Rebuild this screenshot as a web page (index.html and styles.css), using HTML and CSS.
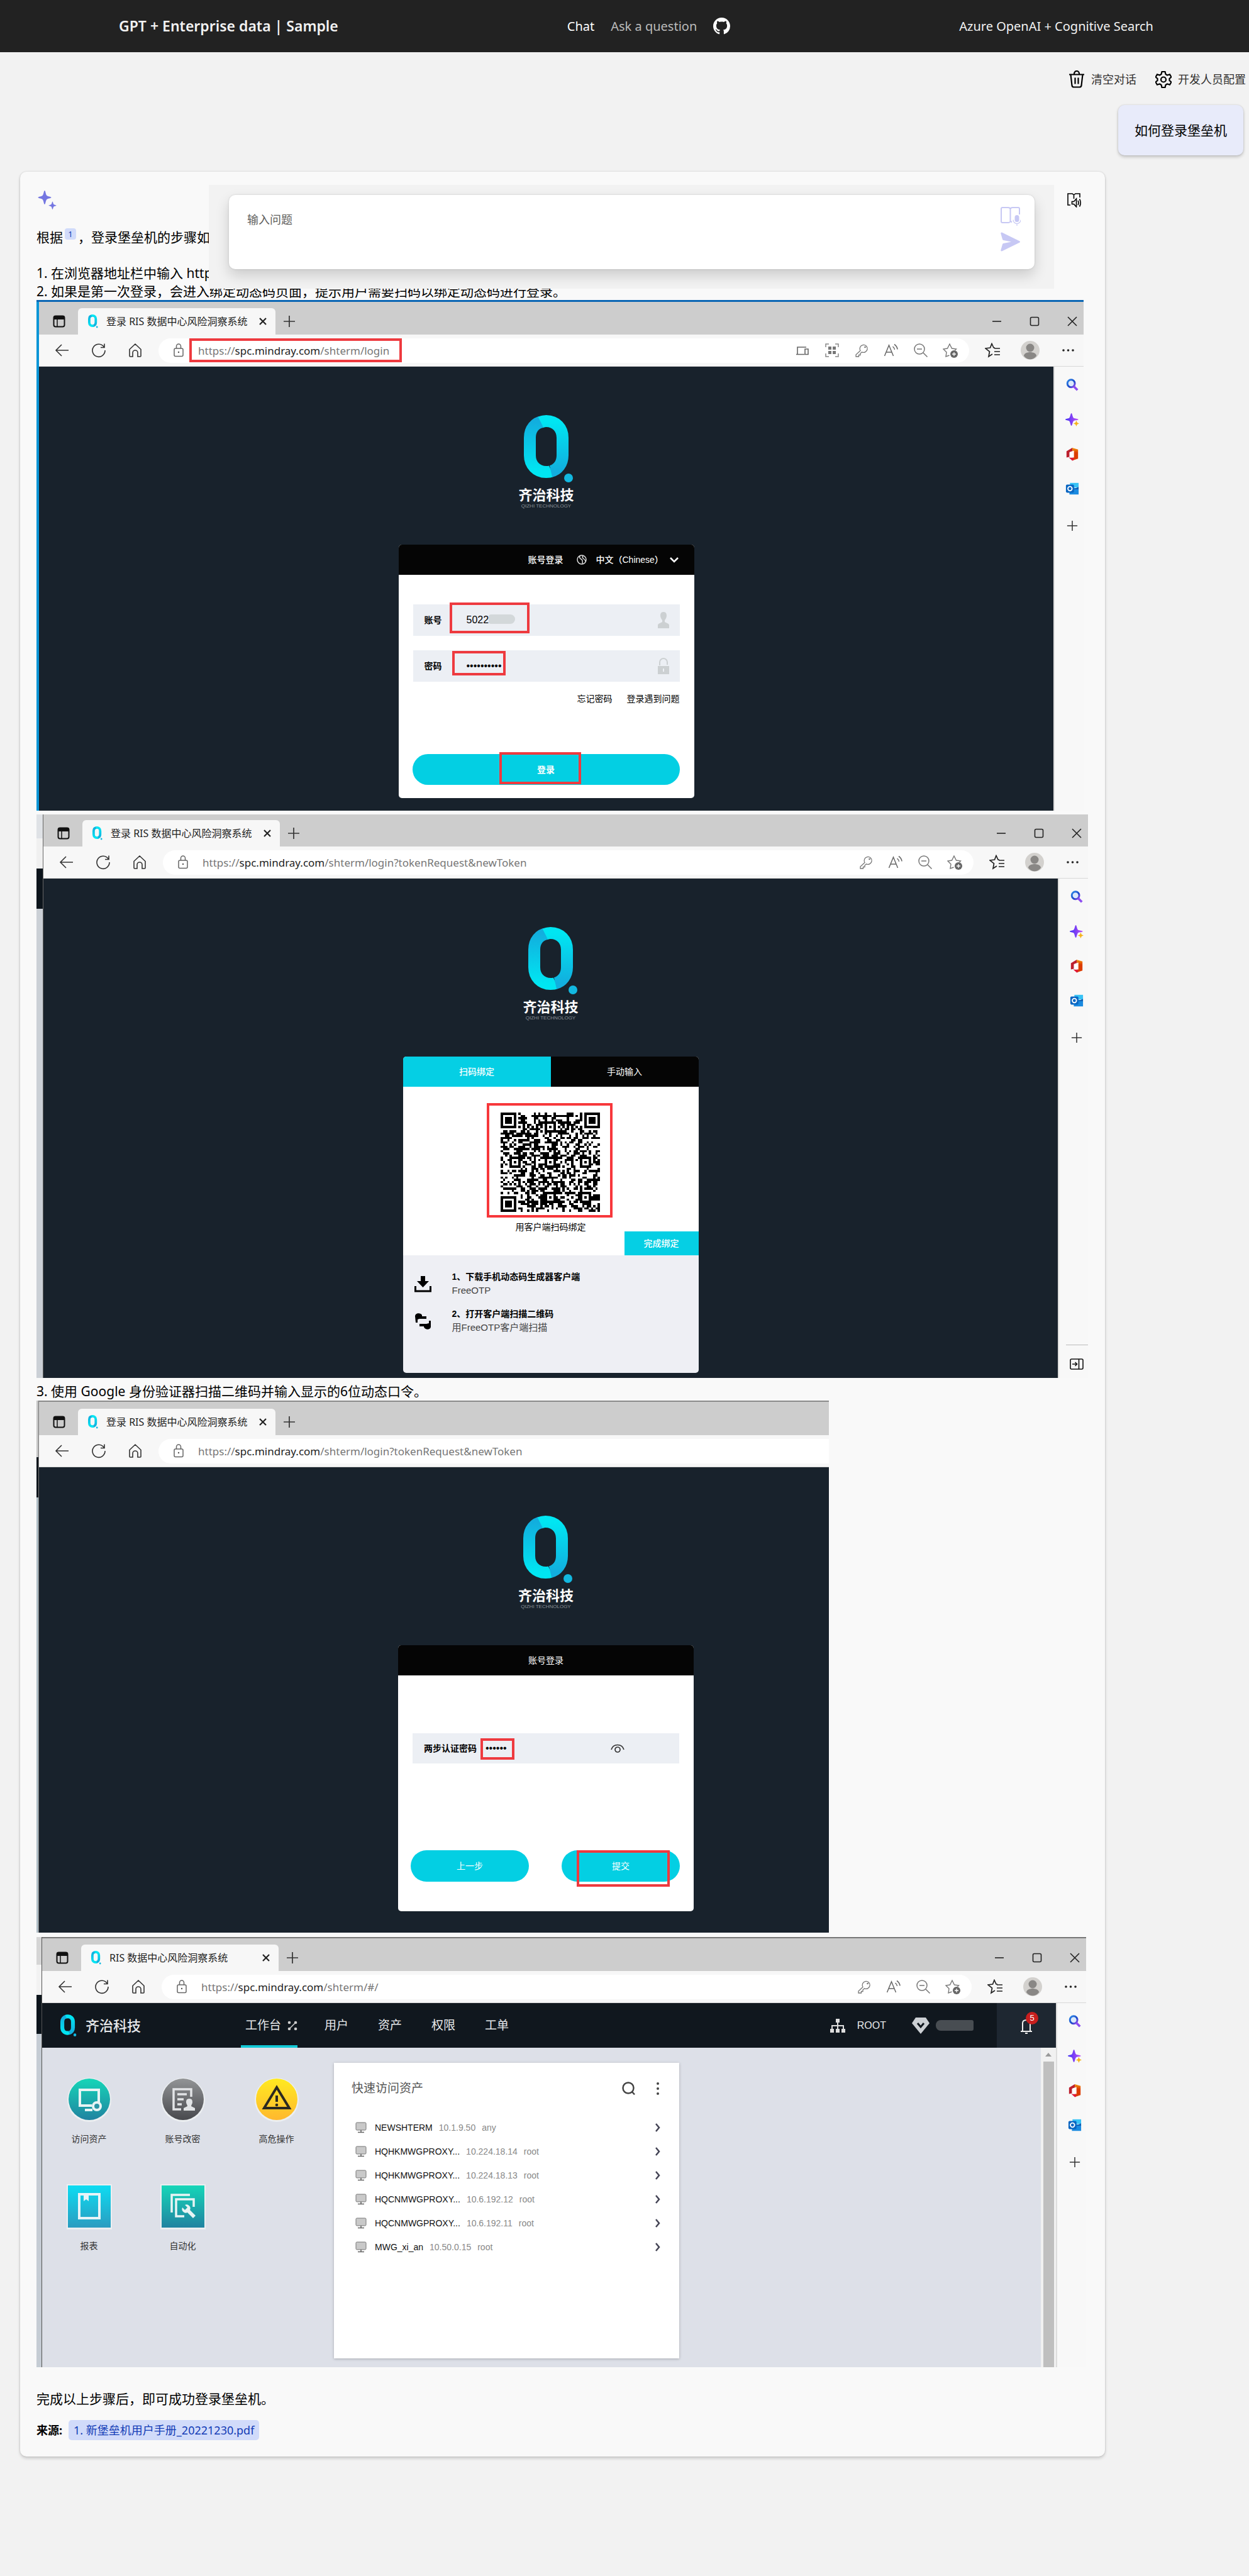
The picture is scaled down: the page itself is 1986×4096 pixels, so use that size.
FILE: index.html
```html
<!DOCTYPE html>
<html lang="zh-CN">
<head>
<meta charset="utf-8">
<meta name="viewport" content="width=device-width, initial-scale=1">
<title>GPT + Enterprise data | Sample</title>
<link rel="stylesheet" href="styles.css">
</head>
<body>
<svg class="defs" width="0" height="0" aria-hidden="true">
  <defs>
    <linearGradient id="gl" x1="0" y1="0" x2="0" y2="100" gradientUnits="userSpaceOnUse"><stop offset=".1" stop-color="#12aede"/><stop offset=".9" stop-color="#00e6f2"/></linearGradient>
    <linearGradient id="gr" x1="0" y1="0" x2="0" y2="100" gradientUnits="userSpaceOnUse"><stop offset=".1" stop-color="#00e6f2"/><stop offset=".9" stop-color="#12aede"/></linearGradient>
    <linearGradient id="gs" x1="0" y1="0" x2="1" y2="1"><stop offset="0" stop-color="#2f8be8"/><stop offset=".6" stop-color="#1b46c8"/><stop offset="1" stop-color="#a24df2"/></linearGradient>
    <linearGradient id="gp" x1="0" y1="0" x2="1" y2="0"><stop offset="0" stop-color="#4433f5"/><stop offset="1" stop-color="#c050f5"/></linearGradient>
    <linearGradient id="go" x1="0" y1="0" x2="0" y2="1"><stop offset="0" stop-color="#f59a10"/><stop offset=".4" stop-color="#dc3c00"/></linearGradient>
    <linearGradient id="gteal" x1="0" y1="0" x2="0" y2="1"><stop offset="0" stop-color="#16d6b8"/><stop offset="1" stop-color="#2083a0"/></linearGradient>
    <linearGradient id="ggray" x1="0" y1="0" x2="0" y2="1"><stop offset="0" stop-color="#929496"/><stop offset="1" stop-color="#48494d"/></linearGradient>
    <linearGradient id="gyel" x1="0" y1="0" x2="0" y2="1"><stop offset="0" stop-color="#ffea20"/><stop offset="1" stop-color="#ffb82e"/></linearGradient>
    <linearGradient id="gcyan" x1="0" y1="0" x2="0" y2="1"><stop offset="0" stop-color="#0ddcf2"/><stop offset="1" stop-color="#2b9cc0"/></linearGradient>
  </defs>
  <symbol id="logo" viewBox="0 0 80 110"><path d="M30 10.500C18 12 9.500 22 9.500 36V64C9.500 79 20 90.500 35.500 90.500 39 90.500 42 90 44 89" fill="none" stroke="url(#gl)" stroke-width="19"/><path d="M27 11.500C30 10 33 9.500 35.500 9.500 51 9.500 61.500 21 61.500 36V64C61.500 77 54 87 43 89.500" fill="none" stroke="url(#gr)" stroke-width="19"/><circle cx="71" cy="100" r="7" fill="#12b8e0"/></symbol>
  <symbol id="profile" viewBox="0 0 20 20"><rect x="1.500" y="1.500" width="17" height="17" rx="3" fill="none" stroke="#111" stroke-width="2"/><path d="M1 7V4a3 3 0 0 1 3-3h12a3 3 0 0 1 3 3v3z" fill="#111"/><path d="M7 7v11" stroke="#111" stroke-width="1.500"/></symbol>
  <symbol id="x" viewBox="0 0 20 20"><path d="M3 3l14 14M17 3L3 17" fill="none" stroke="#222" stroke-width="1.600"/></symbol>
  <symbol id="xb" viewBox="0 0 20 20"><path d="M5 5l10 10M15 5L5 15" fill="none" stroke="#222" stroke-width="2.200"/></symbol>
  <symbol id="plus" viewBox="0 0 20 20"><path d="M10 1v18M1 10h18" fill="none" stroke="#333" stroke-width="1.700"/></symbol>
  <symbol id="min" viewBox="0 0 20 20"><path d="M3 10h14" stroke="#222" stroke-width="1.600"/></symbol>
  <symbol id="max" viewBox="0 0 20 20"><rect x="3.500" y="3.500" width="13" height="13" rx="2" fill="none" stroke="#222" stroke-width="1.600"/></symbol>
  <symbol id="back" viewBox="0 0 24 24"><path d="M22 12H2M11 3l-9 9 9 9" fill="none" stroke="#333" stroke-width="1.600"/></symbol>
  <symbol id="refresh" viewBox="0 0 24 24"><path d="M20.500 7A10 10 0 1 0 22 12M21 1.500V7.500H15" fill="none" stroke="#333" stroke-width="1.600"/></symbol>
  <symbol id="home" viewBox="0 0 24 24"><path d="M3 10.500L12 2l9 8.500V21a1 1 0 0 1-1 1h-4v-6a4 4 0 0 0-8 0v6H4a1 1 0 0 1-1-1z" fill="none" stroke="#333" stroke-width="1.600"/></symbol>
  <symbol id="lock" viewBox="0 0 20 24"><rect x="3" y="9" width="14" height="12.500" rx="2" fill="none" stroke="#666" stroke-width="1.500"/><path d="M6.500 9V5.500a3.500 3.500 0 0 1 7 0V9" fill="none" stroke="#666" stroke-width="1.500"/><circle cx="10" cy="15" r="1.200" fill="#555"/></symbol>
  <symbol id="devices" viewBox="0 0 24 24"><path d="M4 18V7h14M2 18.500h13M16 10h5v8.500h-5z" fill="none" stroke="#666" stroke-width="1.600"/></symbol>
  <symbol id="apps" viewBox="0 0 24 24"><path d="M2 7V2h5M17 2h5v5M22 17v5h-5M7 22H2v-5" fill="none" stroke="#888" stroke-width="1.500"/><path d="M6 6h5v5H6zM13 6h5v5h-5zM6 13h5v5H6zM13 13h5v5h-5z" fill="#777"/></symbol>
  <symbol id="key" viewBox="0 0 24 24"><path d="M10 12.500L3 19v3h4.500v-2.500H10V17l2.500-2.200A6 6 0 1 0 10 12.500z" fill="none" stroke="#777" stroke-width="1.300"/><circle cx="17.500" cy="7" r="1.300" fill="#777"/></symbol>
  <symbol id="read" viewBox="0 0 24 24"><path d="M1.500 21L8.500 4l7 17M4 15h9M14.500 6a8 8 0 0 1 3 5M17 2.500a11 11 0 0 1 5 8" fill="none" stroke="#666" stroke-width="1.500"/></symbol>
  <symbol id="zoomout" viewBox="0 0 24 24"><circle cx="10" cy="10" r="8" fill="none" stroke="#777" stroke-width="1.500"/><path d="M6 10h8M16 16l6.500 6.500" stroke="#777" stroke-width="1.500"/></symbol>
  <symbol id="staradd" viewBox="0 0 24 24"><path d="M10.500 20L5 22l1-7-5-5 6.500-1L11 2l3.500 7 7 1-2 2" fill="none" stroke="#777" stroke-width="1.400"/><circle cx="18" cy="18" r="6" fill="#666"/><path d="M18 15v6M15 18h6" stroke="#fff" stroke-width="1.300"/></symbol>
  <symbol id="fav" viewBox="0 0 24 24"><path d="M12 18l-6 4 1.500-8L1 9l7.500-1L11 1.500 14 8h2" fill="none" stroke="#222" stroke-width="1.700"/><path d="M15 9h9M15 14h9M15 19h9" stroke="#222" stroke-width="1.500"/></symbol>
  <symbol id="avatar" viewBox="0 0 30 30"><circle cx="15" cy="15" r="15" fill="#d3d1ce"/><circle cx="15" cy="11" r="6.500" fill="#898785"/><path d="M5 24c0-8 20-8 20 0-5 7-15 7-20 0z" fill="#898785"/></symbol>
  <symbol id="dots" viewBox="0 0 24 24"><circle cx="5" cy="12" r="1.800" fill="#222"/><circle cx="12.500" cy="12" r="1.800" fill="#222"/><circle cx="20" cy="12" r="1.800" fill="#222"/></symbol>
  <symbol id="s-search" viewBox="0 0 24 24"><circle cx="10" cy="9.500" r="6.500" fill="#dbe9fb" stroke="url(#gs)" stroke-width="3.200"/><path d="M15 15l6 6" stroke="#8d4df0" stroke-width="4"/></symbol>
  <symbol id="s-star" viewBox="0 0 24 24"><path d="M10.500 1c1.500 0 2 7 4 8.500 2 1 8 1 8 2.500s-6 1-8 2.500c-2 1.500-2.500 8.500-4 8.500s-2-7-4-8.500C5 13.500 0 13.500 0 12s5-1.500 6.500-2.500C8.500 8 9 1 10.500 1z" fill="url(#gp)"/><path d="M19 14l1.500 3.500L24 19l-3.500 1.500L19 24l-1.500-3.500L14 19l3.500-1.500z" fill="#f5b41c"/></symbol>
  <symbol id="s-office" viewBox="0 0 24 24"><path d="M2 7l10-6v6l-5 2v8l-5 1z" fill="#bc1f2e"/><path d="M12 1l10 3v16l-9 3z" fill="url(#go)"/><path d="M6 18h8v5l-2 .5z" fill="#e01a38"/><path d="M8 8.500l7-2.500v12H8z" fill="#fff" opacity=".95"/></symbol>
  <symbol id="s-outlook" viewBox="0 0 24 24"><path d="M8 2h15v8H8z" fill="#38c3f5"/><path d="M7 9l16 3v10H7z" fill="#1a8ae0"/><path d="M13 13l10-4v4z" fill="#0c5fb5"/><rect x="1" y="5" width="14" height="14" rx="2" fill="#0a66c2"/><circle cx="8" cy="12" r="3.600" fill="none" stroke="#fff" stroke-width="2"/></symbol>
  <symbol id="monitor" viewBox="0 0 18 18"><rect x="1" y="1" width="16" height="12" rx="1.500" fill="#c9c9c9" stroke="#777"/><path d="M9 13v3M4 16.500h10" stroke="#666" stroke-width="1.600"/></symbol>
  <symbol id="chev" viewBox="0 0 10 16"><path d="M2 2l5 6-5 6" fill="none" stroke="#445" stroke-width="2.500"/></symbol>
</svg>

<header class="header">
  <h3 class="header-title">GPT + Enterprise data | Sample</h3>
  <nav class="header-nav">
    <a href="#" class="active">Chat</a>
    <a href="#">Ask a question</a>
    <a href="#" aria-label="GitHub"><svg width="27" height="27" viewBox="0 0 16 16"><path fill="#fff" d="M8 0C3.580 0 0 3.580 0 8c0 3.540 2.290 6.530 5.470 7.590.4.070.55-.17.55-.38 0-.19-.01-.82-.01-1.490-2.010.37-2.530-.49-2.690-.94-.09-.23-.48-.94-.82-1.130-.28-.15-.68-.52-.01-.53.63-.01 1.080.58 1.230.82.72 1.210 1.870.87 2.330.66.07-.52.28-.87.51-1.070-1.780-.2-3.640-.89-3.640-3.950 0-.87.31-1.590.82-2.150-.08-.2-.36-1.020.08-2.120 0 0 .67-.21 2.200.82.64-.18 1.320-.27 2-.27s1.360.09 2 .27c1.530-1.040 2.200-.82 2.200-.82.44 1.100.16 1.920.08 2.120.51.56.82 1.270.82 2.150 0 3.070-1.870 3.750-3.650 3.950.29.25.54.73.54 1.480 0 1.070-.01 1.930-.01 2.200 0 .21.15.46.55.38A8.010 8.010 0 0 0 16 8c0-4.420-3.580-8-8-8z"/></svg></a>
  </nav>
  <h4 class="header-side">Azure OpenAI + Cognitive Search</h4>
</header>

<main class="chat">
  <div class="commands">
    <button type="button" class="command"><svg width="26" height="28" viewBox="0 0 26 28" fill="none" stroke="#000" stroke-width="2.200"><path d="M1 6.500h24M9 6.500V5a4 4 0 0 1 8 0v1.500M3.500 6.500l2 17.500a3 3 0 0 0 3 2.500h9a3 3 0 0 0 3-2.500l2-17.500M10.500 11.500v10M15.500 11.500v10"/></svg>清空对话</button>
    <button type="button" class="command"><svg width="26" height="28" viewBox="0 0 26 28" fill="none" stroke="#000" stroke-width="2.200"><path d="M10.500 2h5l1 4 2.500 1.500 4-1.300 2.500 4.300-3 2.500v3l3 2.500-2.500 4.300-4-1.300-2.500 1.500-1 4h-5l-1-4L7 21.500l-4 1.300-2.500-4.300 3-2.500v-3l-3-2.500L3 6.200l4 1.300L9.500 6z"/><circle cx="13" cy="14.500" r="4"/></svg>开发人员配置</button>
  </div>

  <div class="question">如何登录堡垒机</div>

  <article class="answer">
    <div class="answer-head">
      <svg width="30" height="30" viewBox="0 0 30 30" fill="#7476e1"><path d="M11 0c1.300 0 1.500 5.500 3 7.500S21.500 9.700 21.500 11s-6 1.500-7.500 3.500-1.700 7.500-3 7.500-1.500-5.500-3-7.500S.5 12.300.5 11 6.500 9.500 8 7.500 9.700 0 11 0z"/><path d="M23.500 17.500c.8 0 1 3.500 2 4.500s4 1 4 1.800-3 .8-4 1.800-1.200 4.400-2 4.400-1-3.400-2-4.400-4-1-4-1.800 3-.8 4-1.800 1.200-4.500 2-4.500z"/></svg>
      <button type="button" class="bare" aria-label="朗读"><svg width="24" height="24" viewBox="0 0 24 24" fill="none" stroke="#000" stroke-width="1.600"><path d="M6 20H2V2h7l2.500 2V10M11.500 4L14 2h7v6"/><path d="M8.500 14.500h3l4-4.500v13l-4-4.500h-3z"/><path d="M18 13q2 3.500 0 7M20.500 10.500q3.500 6 0 12"/></svg></button>
    </div>
    <p class="text">根据<sup class="cite">1</sup>，登录堡垒机的步骤如下：</p>
    <p class="text spaced">1. 在浏览器地址栏中输入 https://spc.mindray.com/shterm/login。</p>
    <p class="text">2. 如果是第一次登录，会进入绑定动态码页面，提示用户需要扫码以绑定动态码进行登录。</p>

    <section class="shot shot-1">
      <div class="stripe"></div>
      <div class="win">
        <div class="strip">
          <svg class="i20 lead"><use href="#profile"/></svg>
          <div class="tab"><svg class="tab-logo"><use href="#logo"/></svg><span>登录 RIS 数据中心风险洞察系统</span><svg class="i20 tab-x"><use href="#xb"/></svg></div>
          <svg class="i20 add"><use href="#plus"/></svg>
          <div class="controls"><svg class="i20"><use href="#min"/></svg><svg class="i20"><use href="#max"/></svg><svg class="i20"><use href="#x"/></svg></div>
        </div>
        <div class="toolbar">
          <svg class="i24"><use href="#back"/></svg><svg class="i24"><use href="#refresh"/></svg><svg class="i24"><use href="#home"/></svg>
          <div class="pill"><svg class="i20 tall"><use href="#lock"/></svg><span class="url mark mark-url">https://<b>spc.mindray.com</b>/shterm/login</span>
            <div class="tools"><svg class="i24"><use href="#devices"/></svg><svg class="i24"><use href="#apps"/></svg><svg class="i24"><use href="#key"/></svg><svg class="i24"><use href="#read"/></svg><svg class="i24"><use href="#zoomout"/></svg><svg class="i24"><use href="#staradd"/></svg></div></div>
          <div class="acts"><svg class="i24"><use href="#fav"/></svg><svg class="i30"><use href="#avatar"/></svg><svg class="i24"><use href="#dots"/></svg></div>
        </div>
        <div class="view">
          <div class="stage">
            <div class="brand"><svg width="80" height="110"><use href="#logo"/></svg><strong>齐治科技</strong><small>QIZHI TECHNOLOGY</small></div>
            <form class="panel panel-login">
              <div class="panel-head login-head"><span>账号登录</span><svg width="16" height="16" viewBox="0 0 16 16" fill="none" stroke="#ddd" stroke-width="1.500"><circle cx="8" cy="8" r="7"/><path d="M5 2q-1 4 2 5t2 7M10 1.500q-2 3 1 5t3 4"/></svg>
                <label class="lang"><select aria-label="语言"><option>中文（Chinese）</option></select><svg width="16" height="16" viewBox="0 0 16 16"><path d="M2 5l6 6 6-6" fill="none" stroke="#fff" stroke-width="2.500"/></svg></label></div>
              <div class="field"><label for="acct">账号</label><span class="mark mark-acct"></span><input id="acct" type="text" value="5022"><i class="smudge"></i><svg width="18" height="28" viewBox="0 0 18 28" fill="#ccd0d2"><path d="M9 1c4 0 5 3 5 6s-2 6-3 7v3l6 3a3 3 0 0 1 1 2v5H0v-5a3 3 0 0 1 1-2l6-3v-3C6 13 4 10 4 7s1-6 5-6z"/></svg></div>
              <div class="field"><label for="pass">密码</label><span class="mark mark-pass"></span><input id="pass" type="password" value="1234567890"><svg width="18" height="28" viewBox="0 0 18 28"><path d="M3 13V8a6 6 0 0 1 12 0v4" fill="none" stroke="#ccd0d2" stroke-width="2"/><path d="M0 14h18v13H0z" fill="#ccd0d2"/><path d="M9 18v5" stroke="#eceff4" stroke-width="2"/></svg></div>
              <div class="links"><a href="#">忘记密码</a><a href="#">登录遇到问题</a></div>
              <div class="wide"><button type="button" class="cta">登录</button><span class="mark mark-login"></span></div>
            </form>
          </div>
          <aside class="side"><svg class="i22"><use href="#s-search"/></svg><svg class="i22"><use href="#s-star"/></svg><svg class="i22"><use href="#s-office"/></svg><svg class="i22"><use href="#s-outlook"/></svg><svg class="i22 slim"><use href="#plus"/></svg></aside>
        </div>
      </div>
    </section>

    <section class="shot shot-2">
      <div class="stripe stripe-wide"></div>
      <div class="win">
        <div class="strip">
          <svg class="i20 lead"><use href="#profile"/></svg>
          <div class="tab"><svg class="tab-logo"><use href="#logo"/></svg><span>登录 RIS 数据中心风险洞察系统</span><svg class="i20 tab-x"><use href="#xb"/></svg></div>
          <svg class="i20 add"><use href="#plus"/></svg>
          <div class="controls"><svg class="i20"><use href="#min"/></svg><svg class="i20"><use href="#max"/></svg><svg class="i20"><use href="#x"/></svg></div>
        </div>
        <div class="toolbar">
          <svg class="i24"><use href="#back"/></svg><svg class="i24"><use href="#refresh"/></svg><svg class="i24"><use href="#home"/></svg>
          <div class="pill"><svg class="i20 tall"><use href="#lock"/></svg><span class="url">https://<b>spc.mindray.com</b>/shterm/login?tokenRequest&amp;newToken</span>
            <div class="tools"><svg class="i24"><use href="#key"/></svg><svg class="i24"><use href="#read"/></svg><svg class="i24"><use href="#zoomout"/></svg><svg class="i24"><use href="#staradd"/></svg></div></div>
          <div class="acts"><svg class="i24"><use href="#fav"/></svg><svg class="i30"><use href="#avatar"/></svg><svg class="i24"><use href="#dots"/></svg></div>
        </div>
        <div class="view">
          <div class="stage">
            <div class="brand"><svg width="80" height="110"><use href="#logo"/></svg><strong>齐治科技</strong><small>QIZHI TECHNOLOGY</small></div>
            <div class="panel panel-bind">
              <div class="bind-tabs"><button type="button" class="on">扫码绑定</button><button type="button">手动输入</button></div>
              <div class="bind-body">
                <div class="qr"><svg id="qr" width="158" height="158" viewBox="0 0 45 45" shape-rendering="crispEdges"></svg></div>
                <p>用客户端扫码绑定</p>
                <button type="button" class="done">完成绑定</button>
              </div>
              <div class="bind-help">
                <svg width="27" height="27" viewBox="0 0 27 27"><path d="M10 1h7v8h6l-9.500 10L4 9h6z"/><path d="M1.500 17v8h24v-8" fill="none" stroke="#000" stroke-width="3"/></svg>
                <div><strong>1、下载手机动态码生成器客户端</strong><span>FreeOTP</span></div>
                <svg width="27" height="27" viewBox="0 0 27 27"><path d="M1 6c0-6 9-6 11-2v2h7v4H8l-3 1v5H2zM26 13v10c-1 5-9 5-11 0v-1H8v-4h11l4-1v-4z"/></svg>
                <div><strong>2、打开客户端扫描二维码</strong><span>用FreeOTP客户端扫描</span></div>
              </div>
            </div>
          </div>
          <aside class="side"><svg class="i22"><use href="#s-search"/></svg><svg class="i22"><use href="#s-star"/></svg><svg class="i22"><use href="#s-office"/></svg><svg class="i22"><use href="#s-outlook"/></svg><svg class="i22 slim"><use href="#plus"/></svg>
            <div class="side-foot"><svg width="22" height="18" viewBox="0 0 22 18" fill="none" stroke="#111" stroke-width="1.600"><rect x="1" y="1" width="20" height="16" rx="2"/><path d="M14.500 1v16M4 9h7M8.500 6l3 3-3 3"/></svg></div></aside>
        </div>
      </div>
    </section>

    <p class="text">3. 使用 Google 身份验证器扫描二维码并输入显示的6位动态口令。</p>

    <section class="shot shot-3">
      <div class="stripe stripe-thin"></div>
      <div class="win">
        <div class="strip">
          <svg class="i20 lead"><use href="#profile"/></svg>
          <div class="tab"><svg class="tab-logo"><use href="#logo"/></svg><span>登录 RIS 数据中心风险洞察系统</span><svg class="i20 tab-x"><use href="#xb"/></svg></div>
          <svg class="i20 add"><use href="#plus"/></svg>
        </div>
        <div class="toolbar">
          <svg class="i24"><use href="#back"/></svg><svg class="i24"><use href="#refresh"/></svg><svg class="i24"><use href="#home"/></svg>
          <div class="pill"><svg class="i20 tall"><use href="#lock"/></svg><span class="url">https://<b>spc.mindray.com</b>/shterm/login?tokenRequest&amp;newToken</span></div>
        </div>
        <div class="view">
          <div class="stage">
            <div class="brand"><svg width="80" height="110"><use href="#logo"/></svg><strong>齐治科技</strong><small>QIZHI TECHNOLOGY</small></div>
            <form class="panel panel-otp">
              <div class="panel-head">账号登录</div>
              <div class="field field-otp"><label for="otp">两步认证密码</label><span class="mark mark-otp"></span><input id="otp" type="password" value="123456"><svg width="22" height="18" viewBox="0 0 22 18" fill="none" stroke="#333" stroke-width="1.700"><path d="M1 11C4 1 18 1 21 11"/><circle cx="11" cy="11" r="4"/></svg></div>
              <div class="pair"><button type="button" class="cta">上一步</button><button type="button" class="cta">提交</button><span class="mark mark-submit"></span></div>
            </form>
          </div>
        </div>
      </div>
    </section>

    <section class="shot shot-4">
      <div class="stripe stripe-mid"></div>
      <div class="win">
        <div class="strip">
          <svg class="i20 lead"><use href="#profile"/></svg>
          <div class="tab"><svg class="tab-logo"><use href="#logo"/></svg><span>RIS 数据中心风险洞察系统</span><svg class="i20 tab-x"><use href="#xb"/></svg></div>
          <svg class="i20 add"><use href="#plus"/></svg>
          <div class="controls"><svg class="i20"><use href="#min"/></svg><svg class="i20"><use href="#max"/></svg><svg class="i20"><use href="#x"/></svg></div>
        </div>
        <div class="toolbar">
          <svg class="i24"><use href="#back"/></svg><svg class="i24"><use href="#refresh"/></svg><svg class="i24"><use href="#home"/></svg>
          <div class="pill"><svg class="i20 tall"><use href="#lock"/></svg><span class="url">https://<b>spc.mindray.com</b>/shterm/#/</span>
            <div class="tools"><svg class="i24"><use href="#key"/></svg><svg class="i24"><use href="#read"/></svg><svg class="i24"><use href="#zoomout"/></svg><svg class="i24"><use href="#staradd"/></svg></div></div>
          <div class="acts"><svg class="i24"><use href="#fav"/></svg><svg class="i30"><use href="#avatar"/></svg><svg class="i24"><use href="#dots"/></svg></div>
        </div>
        <div class="view">
          <div class="app">
            <div class="app-bar">
              <svg class="app-logo" width="26" height="36"><use href="#logo"/></svg><strong>齐治科技</strong>
              <nav><a href="#" class="on">工作台<svg width="16" height="16" viewBox="0 0 16 16" stroke="#ccc" fill="#ccc" stroke-width="1.600"><path d="M3 13L13 3"/><circle cx="3" cy="3" r="1.500"/><circle cx="13" cy="13" r="1.500"/><circle cx="13" cy="3" r="1.500"/><circle cx="3" cy="13" r="1.500"/></svg></a><a href="#">用户</a><a href="#">资产</a><a href="#">权限</a><a href="#">工单</a></nav>
              <div class="app-user">
                <svg width="24" height="24" viewBox="0 0 24 24"><path d="M9 1h6v6H9zM0 17h6v6H0zM9 17h6v6H9zM18 17h6v6h-6z" fill="#ddd"/><path d="M12 6v12M3 18v-6h18v6" fill="none" stroke="#ddd" stroke-width="2"/></svg><span>ROOT</span>
                <svg class="gem" width="28" height="26" viewBox="0 0 28 26"><path d="M6 0h16l6 9-14 17L0 9z" fill="#ccd0d4"/><path d="M9 9l5 6 5-6" fill="none" stroke="#10171e" stroke-width="3"/></svg><i class="blot"></i>
              </div>
              <div class="bell"><svg width="20" height="26" viewBox="0 0 20 26" fill="none" stroke="#eee" stroke-width="2"><path d="M1 22h18M4 22V9q0-5 6-5t6 5v13M8 25h4"/></svg><em>5</em></div>
            </div>
            <div class="desk">
              <div class="launch">
                <a href="#" class="tile"><svg width="72" height="72" viewBox="0 0 72 72"><circle cx="36" cy="36" r="35" fill="#eceff1"/><circle cx="36" cy="35" r="33" fill="url(#gteal)"/><path d="M40 45H21V20h30v20M29 52h12" fill="none" stroke="#e8f4f4" stroke-width="4"/><circle cx="48" cy="46" r="6" fill="#2b96a6" stroke="#e8f4f4" stroke-width="4"/></svg>访问资产</a>
                <a href="#" class="tile"><svg width="72" height="72" viewBox="0 0 72 72"><circle cx="36" cy="36" r="35" fill="#eceff1"/><circle cx="36" cy="35" r="33" fill="url(#ggray)"/><path d="M33 51H21V19h28v12M27 27h15M27 35h10M27 43h7" fill="none" stroke="#e2e4e6" stroke-width="3.500"/><path d="M46 34c5 0 5 4 5 6s-2 4-2 6l6 3v4H37v-4l6-3c0-2-2-4-2-6s0-6 5-6z" fill="#e2e4e6"/></svg>账号改密</a>
                <a href="#" class="tile"><svg width="72" height="72" viewBox="0 0 72 72"><circle cx="36" cy="36" r="35" fill="#eceff1"/><circle cx="36" cy="35" r="33" fill="url(#gyel)"/><path d="M36 16L56 49H16z" fill="none" stroke="#2c2a20" stroke-width="4"/><path d="M36 29v10" stroke="#2c2a20" stroke-width="4"/><circle cx="36" cy="44" r="2.300" fill="#2c2a20"/></svg>高危操作</a>
                <a href="#" class="tile"><svg width="72" height="72" viewBox="0 0 72 72"><path d="M0 0h72v72H0z" fill="#eceff1"/><path d="M2 2h68v67H2z" fill="url(#gcyan)"/><path d="M20 16h32v38H20z" fill="none" stroke="#e8f4f8" stroke-width="4"/><path d="M27 15h8v12l-4-3-4 3z" fill="#e8f4f8"/></svg>报表</a>
                <a href="#" class="tile"><svg width="72" height="72" viewBox="0 0 72 72"><path d="M0 0h72v72H0z" fill="#eceff1"/><path d="M2 2h68v67H2z" fill="url(#gteal)"/><path d="M18 45V17h29M38 51H25V24h28v12" fill="none" stroke="#e8f4f4" stroke-width="3.500"/><path d="M35 37a6 6 0 0 0 8 8l9 9 4-4-9-9a6 6 0 0 0-8-8l4 4-4 4z" fill="#e8f4f4"/></svg>自动化</a>
              </div>
              <div class="quick">
                <div class="quick-head"><h5>快速访问资产</h5><svg width="24" height="24" viewBox="0 0 24 24" fill="none" stroke="#444" stroke-width="2.500"><circle cx="11" cy="11" r="8.500"/><path d="M16.500 16.500l4.500 5"/></svg><svg width="6" height="22" viewBox="0 0 6 22" fill="#444"><circle cx="3" cy="3" r="2"/><circle cx="3" cy="11" r="2"/><circle cx="3" cy="19" r="2"/></svg></div>
                <ul>
                  <li><svg width="18" height="18"><use href="#monitor"/></svg><b>NEWSHTERM</b><span>10.1.9.50</span><span>any</span><svg class="go" width="10" height="16"><use href="#chev"/></svg></li>
                  <li><svg width="18" height="18"><use href="#monitor"/></svg><b>HQHKMWGPROXY...</b><span>10.224.18.14</span><span>root</span><svg class="go" width="10" height="16"><use href="#chev"/></svg></li>
                  <li><svg width="18" height="18"><use href="#monitor"/></svg><b>HQHKMWGPROXY...</b><span>10.224.18.13</span><span>root</span><svg class="go" width="10" height="16"><use href="#chev"/></svg></li>
                  <li><svg width="18" height="18"><use href="#monitor"/></svg><b>HQCNMWGPROXY...</b><span>10.6.192.12</span><span>root</span><svg class="go" width="10" height="16"><use href="#chev"/></svg></li>
                  <li><svg width="18" height="18"><use href="#monitor"/></svg><b>HQCNMWGPROXY...</b><span>10.6.192.11</span><span>root</span><svg class="go" width="10" height="16"><use href="#chev"/></svg></li>
                  <li><svg width="18" height="18"><use href="#monitor"/></svg><b>MWG_xi_an</b><span>10.50.0.15</span><span>root</span><svg class="go" width="10" height="16"><use href="#chev"/></svg></li>
                </ul>
              </div>
              <div class="scroll"><svg width="12" height="22" viewBox="0 0 12 22"><path d="M6 8l5 6H1z" fill="#999"/></svg><div></div></div>
            </div>
          </div>
          <aside class="side"><svg class="i22"><use href="#s-search"/></svg><svg class="i22"><use href="#s-star"/></svg><svg class="i22"><use href="#s-office"/></svg><svg class="i22"><use href="#s-outlook"/></svg><svg class="i22 slim"><use href="#plus"/></svg></aside>
        </div>
      </div>
    </section>

    <p class="text closing">完成以上步骤后，即可成功登录堡垒机。</p>
    <div class="sources"><strong>来源:</strong><a href="#">1. 新堡垒机用户手册_20221230.pdf</a></div>
  </article>

  <div class="composer">
    <form class="composer-box">
      <textarea aria-label="输入问题" placeholder="输入问题"></textarea>
      <div class="composer-acts">
        <button type="button" class="bare" aria-label="语音"><svg width="32" height="30" viewBox="0 0 32 30"><path d="M18 24.500q-1.500-1-2-2-1 2.500-4 2.500H3a2 2 0 0 1-2-2V3a2 2 0 0 1 2-2h9q3 0 3.500 2.500Q16 1 19 1h9a2 2 0 0 1 2 2v9M15.500 3v20" fill="none" stroke="#c7c8f4" stroke-width="2"/><rect x="22.500" y="13" width="7" height="11" rx="3.500" fill="#c7c8f4"/><path d="M20 20.500a6 6 0 0 0 12 0M26 26.500v3.500" fill="none" stroke="#c7c8f4" stroke-width="1.200"/></svg></button>
        <button type="button" class="bare" aria-label="发送"><svg width="32" height="31" viewBox="0 0 32 31"><path d="M2.500.7L30.500 14.500a1.300 1.300 0 0 1 0 2L2.500 30.300C1.200 31 0 30 .4 28.500L3 19.500a2 2 0 0 1 1.500-1.500L17 15.500 4.500 13A2 2 0 0 1 3 11.500L.4 2.500C0 1 1.200 0 2.500.7z" fill="#c7c8f4"/></svg></button>
      </div>
    </form>
  </div>
</main>
<script src="qr.js"></script>
</body>
</html>
```
FILE: styles.css
```css
* { box-sizing: border-box; }
body { margin: 0; min-height: 100vh; background: #f2f2f2; color: #000; font: 21px/29px "Noto Sans", "Noto Sans CJK SC", sans-serif; }
h3, h4, h5, p, ul { margin: 0; padding: 0; }
button, input, select, textarea { font: inherit; color: inherit; }
a { color: inherit; text-decoration: none; }
svg { display: block; flex: none; }
.defs { position: absolute; }
.bare { padding: 0; border: 0; background: none; }

.header { display: flex; align-items: center; justify-content: space-between; height: 83px; padding: 0 152px 0 189px; background: #222; color: #f2f2f2; }
.header-title { font-size: 23px; font-weight: 600; }
.header-side { font-size: 20px; font-weight: 400; }
.header-nav { display: flex; align-items: center; gap: 26px; font-size: 20px; color: #bbb; }
.header-nav .active { color: #fff; }

.chat { position: relative; padding-top: 22px; }
.commands { display: flex; justify-content: flex-end; gap: 30px; height: 42px; padding-right: 5px; }
.command { display: flex; align-items: center; gap: 10px; padding: 0; border: 0; background: none; font-size: 18px; color: #323130; }
.question { width: fit-content; margin: 20px 9px 26px auto; padding: 26px; line-height: 28px; border-radius: 10px; background: #e8ebfa; box-shadow: 0 3px 5px rgba(0,0,0,.18), 0 0 3px rgba(0,0,0,.14); }

.answer { margin: 0 229px 0 32px; padding: 26px; border-radius: 10px; background: #f9f9f9; box-shadow: 0 3px 5px rgba(0,0,0,.16), 0 0 3px rgba(0,0,0,.14); }
.answer-head { display: flex; justify-content: space-between; align-items: center; height: 37px; margin: 0 11px 27px 2px; }
.text { white-space: nowrap; }
.spaced { margin-top: 28px; }
.cite { display: inline-block; width: 18px; height: 18px; margin: 0 3px; border-radius: 4px; background: #d1dbfa; color: #123bb6; font-size: 13px; line-height: 18px; text-align: center; vertical-align: 8px; }
.closing { margin-top: 36px; }
.sources { display: flex; align-items: center; gap: 10px; margin-top: 19px; font-size: 18px; line-height: 32px; }
.sources a { padding: 0 8px; border-radius: 5px; background: #d1dbfa; color: #123bb6; }

.composer { position: absolute; top: 211px; left: 332px; right: 310px; height: 165px; padding: 16px 31px 31px 32px; background: #f2f2f2; overflow: hidden; }
.composer-box { display: flex; height: 118px; padding: 19px 22px 0 29px; border-radius: 10px; background: #fff; box-shadow: 0 10px 21px rgba(0,0,0,.16), 0 0 3px rgba(0,0,0,.14); }
.composer-box textarea { flex: 1; height: 80px; padding: 7px 0; border: 0; outline: 0; resize: none; background: none; font-size: 18px; line-height: 26px; }
.composer-box textarea::placeholder { color: #605e5c; opacity: 1; }
.composer-acts { display: flex; flex-direction: column; gap: 10px; }

/* browser window illustrations */
.shot { display: flex; margin-bottom: 7px; }
.shot-1 { margin: -1px 8px 6px 0; padding-top: 3px; background: #0a66b4; }
.shot-2 { margin-right: 1px; }
.shot-3 { width: 1260px; max-width: 100%; overflow: hidden; }
.shot-4 { margin: 0 4px 0 0; }
.stripe { width: 4px; flex: none; background: #0a95d6; }
.stripe-wide { width: 11px; border-right: 1px solid #666; background: linear-gradient(#dfe2e6 0 38px, #f0f0f0 38px 86px, #0d151c 86px 150px, #cbd0d6 150px); }
.stripe-thin { width: 4px; border-right: 1px solid #777; background: linear-gradient(#c4c4c4 0 90px, #0d151c 90px 154px, #aebdc5 154px); }
.stripe-mid { width: 9px; border-right: 1px solid #555; background: linear-gradient(#d5d5d5 0 44px, #f2f2f2 44px 92px, #0d151c 92px 154px, #c5ccd4 154px); }
.win { flex: 1; min-width: 0; background: #f7f7f7; }
.i20 { width: 20px; height: 20px; }
.i22 { width: 22px; height: 22px; }
.i24 { width: 24px; height: 24px; }
.i30 { width: 30px; height: 30px; }
.tall { height: 24px; }
.strip { display: flex; align-items: center; padding: 10px 8px 0 22px; background: #cdcdcd; }
.shot-2 .strip { padding-top: 9px; }
.shot-3 .strip { padding-top: 11px; border-top: 2px solid #8a8a8a; }
.shot-4 .strip { padding-top: 10px; border-top: 2px solid #777; }
.tab { display: flex; align-items: center; width: 314px; height: 42px; margin: 0 12px 0 20px; padding: 0 10px 0 15px; border-radius: 6px 6px 0 0; background: #f7f7f7; font-size: 16px; color: #222; white-space: nowrap; }
.tab-logo { width: 18px; height: 22px; margin-right: 12px; }
.tab-x { margin-left: auto; }
.controls { display: flex; gap: 40px; margin-left: auto; }
.toolbar { display: flex; align-items: center; gap: 34px; height: 51px; padding: 0 13px 0 25px; border-bottom: 1px solid #d8d8d8; }
.pill { display: flex; align-items: center; flex: 1; height: 39px; margin-left: -9px; padding: 0 18px 0 22px; border-radius: 20px; background: #fff; }
.url { position: relative; margin-left: 21px; font-size: 17px; color: #767676; white-space: nowrap; }
.url b { font-weight: 400; color: #222; }
.tools { display: flex; gap: 23px; margin-left: auto; }
.acts { display: flex; align-items: center; gap: 33px; margin-left: -9px; }
.shot-3 .pill { margin-right: -13px; border-radius: 20px 0 0 20px; }
.view { display: flex; }
.stage { flex: 1; min-width: 0; background: #18222c; }
.shot-1 .stage { height: 706px; }
.shot-2 .stage { height: 794px; }
.shot-3 .stage { flex: none; width: 1612px; height: 740px; }
.side { display: flex; flex-direction: column; align-items: flex-end; gap: 33px; width: 48px; padding: 18px 7px 0 0; border-left: 2px solid #ddd; background: #f8f8f8; }
.slim { padding: 2px; margin-top: 4px; }
.side-foot { width: 35px; height: 53px; margin: auto -7px 0 0; padding: 21px 0 0 6px; border-top: 1px solid #bbb; }

.brand { display: flex; flex-direction: column; align-items: center; height: 283px; padding-top: 77px; color: #fff; }
.brand svg { margin-left: 8px; }
.brand strong { margin-top: 2px; font-size: 22px; line-height: 29px; font-weight: 600; }
.brand small { font: 8px/8px "Liberation Sans", sans-serif; color: #8a9096; }
.panel { width: 470px; margin: 0 auto; border-radius: 5px; overflow: hidden; background: #fff; font: 14px/20px "Liberation Sans", "Noto Sans CJK SC", sans-serif; }
.panel-head { height: 48px; line-height: 48px; text-align: center; background: #050505; color: #fff; }
.panel-login { height: 403px; }
.login-head { display: flex; justify-content: flex-end; align-items: center; padding-right: 24px; font-weight: 500; }
.login-head > svg { margin: 0 15px 0 21px; }
.lang { display: flex; align-items: center; gap: 8px; }
.lang select { padding: 0; border: 0; outline: 0; appearance: none; background: none; color: #fff; }
.field { position: relative; display: flex; align-items: center; height: 50px; margin: 47px 23px 0; padding: 0 17px 0 18px; background: #eceff4; }
.field + .field { margin-top: 23px; }
.field label { width: 67px; font-weight: 700; }
.field input { flex: 1; min-width: 0; padding: 0; border: 0; outline: 0; background: none; font-size: 16px; }
.smudge { position: absolute; left: 120px; top: 16px; width: 42px; height: 15px; border-radius: 4px 8px 8px 4px; background: #d3d8da; }
.mark { position: relative; }
.mark-url::after { content: ""; position: absolute; inset: -5px -20px -4px -14px; border: 4px solid #ee3a3f; }
span.mark:empty { position: absolute; border: 4px solid #ee3a3f; pointer-events: none; }
.field .mark-acct { left: 58px; top: -3px; width: 127px; height: 49px; }
.field .mark-pass { left: 62px; top: 1px; width: 85px; height: 39px; }
.links { display: flex; justify-content: flex-end; gap: 23px; margin: 17px 23px 78px; }
.cta { width: 425px; height: 49px; border: 0; border-radius: 25px; background: #03cfe3; color: #fff; font-size: 14px; }
.wide { position: relative; margin: 0 22px; font-weight: 700; }
.wide .mark-login { left: 138px; top: -3px; width: 130px; height: 51px; }

.panel-bind { height: 503px; background: #eeeff4; }
.bind-tabs { display: flex; height: 48px; }
.bind-tabs button { flex: 1; border: 0; background: #050505; color: #fff; }
.bind-tabs .on { background: #05cfe4; font-weight: 500; }
.bind-body { position: relative; height: 268px; padding-top: 26px; background: #fff; text-align: center; }
.qr { width: 200px; height: 182px; margin: 0 0 5px 133px; padding: 11px 0 0 18px; border: 4px solid #f7373b; }
.done { position: absolute; right: 0; bottom: 0; width: 118px; height: 38px; border: 0; background: #05cfe4; color: #fff; font-weight: 500; }
.bind-help { display: grid; grid-template-columns: 27px 1fr; gap: 15px 33px; align-items: center; padding: 23px 18px; }
.bind-help strong, .bind-help span { display: block; line-height: 22px; }
.bind-help span { font-size: 15px; color: #444; }

.panel-otp { height: 423px; }
.field-otp { height: 48px; margin-top: 92px; padding-right: 87px; }
.field-otp label { width: 98px; }
.field .mark-otp { left: 108px; top: 8px; width: 54px; height: 34px; }
.pair { position: relative; display: flex; justify-content: space-between; margin: 138px 22px 0 20px; }
.pair .cta { width: 188px; height: 50px; }
.pair .mark-submit { right: 16px; top: 0; width: 148px; height: 58px; }

.app { flex: 1; min-width: 0; background: #dde0e8; }
.app-bar { display: flex; align-items: center; height: 71px; padding-left: 29px; background: #10171e; color: #e6e8ea; font-size: 19px; }
.app-bar > strong { margin-left: 14px; font-size: 22px; font-weight: 500; }
.app-bar nav { display: flex; gap: 47px; margin-left: 166px; }
.app-bar nav a { display: flex; align-items: center; gap: 10px; height: 71px; }
.app-bar nav .on { margin: 0 -4px 0 -7px; padding-left: 7px; box-shadow: inset 0 -4px #12c9d6; }
.app-user { display: flex; align-items: center; margin-left: auto; font: 16px/20px "Liberation Sans", sans-serif; }
.app-user span { margin-left: 19px; }
.gem { margin-left: 41px; }
.blot { width: 60px; height: 17px; margin: 0 37px 0 10px; border-radius: 8px 3px 3px 8px; background: #484d52; }
.bell { position: relative; display: flex; align-items: center; justify-content: center; width: 94px; height: 71px; background: #1e2731; }
.bell em { position: absolute; left: 46px; top: 14px; width: 20px; border-radius: 50%; background: #c81e1e; font: normal 13px/20px "Liberation Sans", sans-serif; text-align: center; color: #fff; }
.desk { display: flex; height: 508px; }
.launch { display: grid; grid-template-columns: repeat(3, 149px); gap: 62px 0; align-content: start; margin-right: 17px; padding-top: 47px; }
.tile { display: flex; flex-direction: column; align-items: center; gap: 16px; font-size: 14px; line-height: 20px; color: #333; }
.quick { width: 549px; height: 470px; margin-top: 24px; padding: 26px 28px; background: #fff; box-shadow: 0 1px 4px rgba(0,0,0,.25); }
.quick-head { display: flex; align-items: center; }
.quick-head h5 { flex: 1; font-size: 19px; font-weight: 400; color: #555; }
.quick-head svg:last-child { margin: 0 3px 0 31px; }
.quick ul { margin-top: 29px; list-style: none; font: 14px/38px "Liberation Sans", sans-serif; }
.quick li { display: flex; align-items: center; height: 38px; padding: 0 1px 0 6px; color: #888; }
.quick li b { margin-left: 13px; font-weight: 400; color: #111; }
.quick li span { margin-left: 10px; }
.quick li .go { margin-left: auto; }
.scroll { display: flex; flex-direction: column; align-items: center; width: 24px; margin-left: auto; background: #f1f1f1; }
.scroll div { flex: 1; width: 17px; background: #bfbfbf; }
```
FILE: qr.js
```js
// Draws a 45x45 version 7 style code: finders, alignment squares and filler modules.
(function () {
  var n = 45, cells = [], seed = 20221230, d = '';
  function rnd() { seed = (seed * 1103515245 + 12345) % 2147483648; return seed / 2147483648; }
  for (var y = 0; y < n; y++) { cells.push([]); for (var x = 0; x < n; x++) cells[y].push(rnd() < 0.5); }
  for (var t = 0; t < n; t++) { cells[6][t] = cells[t][6] = t % 2 === 0; }
  function square(cx, cy, r, dark) {
    for (var j = -r; j <= r; j++) for (var i = -r; i <= r; i++) {
      var yy = cy + j, xx = cx + i;
      if (yy >= 0 && xx >= 0 && yy < n && xx < n) cells[yy][xx] = dark(Math.max(Math.abs(i), Math.abs(j)));
    }
  }
  [[22, 6], [6, 22], [22, 22], [38, 22], [22, 38], [38, 38]].forEach(function (p) {
    square(p[0], p[1], 2, function (k) { return k !== 1; });
  });
  [[3, 3], [41, 3], [3, 41]].forEach(function (p) {
    square(p[0], p[1], 4, function (k) { return k < 2 || k === 3; });
  });
  cells.forEach(function (row, r) { row.forEach(function (on, c) { if (on) d += 'M' + c + ' ' + r + 'h1v1h-1z'; }); });
  var path = document.createElementNS('http://www.w3.org/2000/svg', 'path');
  path.setAttribute('d', d);
  document.getElementById('qr').appendChild(path);
})();
```
